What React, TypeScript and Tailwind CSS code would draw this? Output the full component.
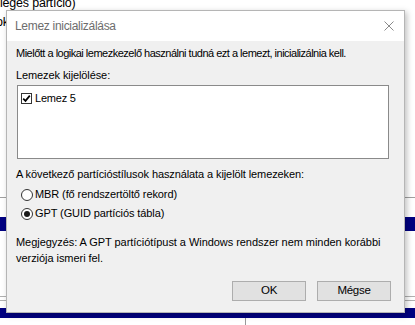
import React from "react";

const font = { fontFamily: '"Liberation Sans", Arial, sans-serif' };

function Check() {
  return (
    <div className="w-[11px] h-[11px] border border-[#333] bg-white flex items-center justify-center shrink-0">
      <svg width="9" height="9" viewBox="0 0 9 9">
        <path d="M1.2 4.6 L3.5 6.9 L7.8 1.6" stroke="#000" strokeWidth="1.7" fill="none" />
      </svg>
    </div>
  );
}

function Radio({ on }: { on?: boolean }) {
  return (
    <div className="w-[12px] h-[12px] rounded-full border border-[#333] bg-white flex items-center justify-center shrink-0">
      {on && <div className="w-[6px] h-[6px] rounded-full bg-[#1a1a1a]" />}
    </div>
  );
}

export default function App() {
  return (
    <div
      className="relative w-[415px] h-[325px] bg-white overflow-hidden text-[11px] tracking-[-0.2px] text-black whitespace-nowrap"
      style={font}
    >
      {/* background window content */}
      <div className="absolute left-0 top-[-4px] text-[12.5px] leading-[15px] text-black">leges partíció)</div>
      <div className="absolute left-[-4px] top-[15px] text-[12.5px] leading-[15px]">ok</div>
      <div className="absolute left-0 right-0 top-[197px] h-[1px] bg-[#a0a0a0]" />
      <div className="absolute left-0 right-0 top-[217px] h-[14px] bg-[#000080]" />
      <div className="absolute left-0 right-0 top-[296px] h-[1px] bg-[#b0b0b0]" />
      <div className="absolute left-0 right-0 top-[300px] h-[1px] bg-[#b0b0b0]" />
      <div className="absolute left-0 right-0 top-[308px] h-[10px] bg-[#000080]" />
      <div className="absolute left-[245px] top-[318px] w-[1px] h-[7px] bg-[#999]" />

      {/* dialog */}
      <div className="absolute left-[6px] top-[10px] w-[399px] h-[303px] border border-[#b5b5b5] bg-[#f0f0f0] flex flex-col shadow-[2px_2px_6px_rgba(0,0,0,0.25)]">
        <div className="h-[30px] bg-white flex items-center justify-between pl-[8px] pr-[10px] shrink-0">
          <span className="text-[#6d6d6d] text-[12px] tracking-[-0.3px]">Lemez inicializálása</span>
          <svg width="10" height="10" viewBox="0 0 10 10">
            <path d="M0.5 0.5 L9.5 9.5 M9.5 0.5 L0.5 9.5" stroke="#8a8a8a" strokeWidth="1" />
          </svg>
        </div>
        <div className="flex flex-col pl-[9px] pr-[15px] pt-[5px]">
          <div className="leading-[15px] tracking-[-0.5px]">Mielőtt a logikai lemezkezelő használni tudná ezt a lemezt, inicializálnia kell.</div>
          <div className="leading-[15px] mt-[7px] tracking-[-0.1px]">Lemezek kijelölése:</div>
          <div className="ml-[1px] mt-[2px] h-[74px] border border-[#8a8a8a] bg-white px-[3px] pt-[6px]">
            <div className="flex items-center gap-[3px] leading-[13px]">
              <Check />
              <span>Lemez 5</span>
            </div>
          </div>
          <div className="leading-[15px] mt-[8px] tracking-[-0.1px]">A következő partícióstílusok használata a kijelölt lemezeken:</div>
          <div className="flex items-center gap-[2px] ml-[5px] mt-[4px] h-[17px] tracking-[-0.1px]">
            <Radio />
            <span>MBR (fő rendszertöltő rekord)</span>
          </div>
          <div className="flex items-center gap-[2px] ml-[5px] mt-[2px] h-[17px] tracking-[-0.1px]">
            <Radio on />
            <span>GPT (GUID partíciós tábla)</span>
          </div>
          <div className="leading-[16px] mt-[12px] tracking-[-0.05px]">
            Megjegyzés: A GPT partíciótípust a Windows rendszer nem minden korábbi
            <br />
            verziója ismeri fel.
          </div>
          <div className="flex justify-end gap-[11px] mt-[15px]">
            <button className="w-[74px] h-[20px] bg-[#e1e1e1] border border-[#adadad] text-[11.5px] tracking-[-0.3px]">OK</button>
            <button className="w-[74px] h-[20px] bg-[#e1e1e1] border border-[#adadad] text-[11.5px] tracking-[-0.3px] mr-[-2px]">Mégse</button>
          </div>
        </div>
      </div>
    </div>
  );
}
